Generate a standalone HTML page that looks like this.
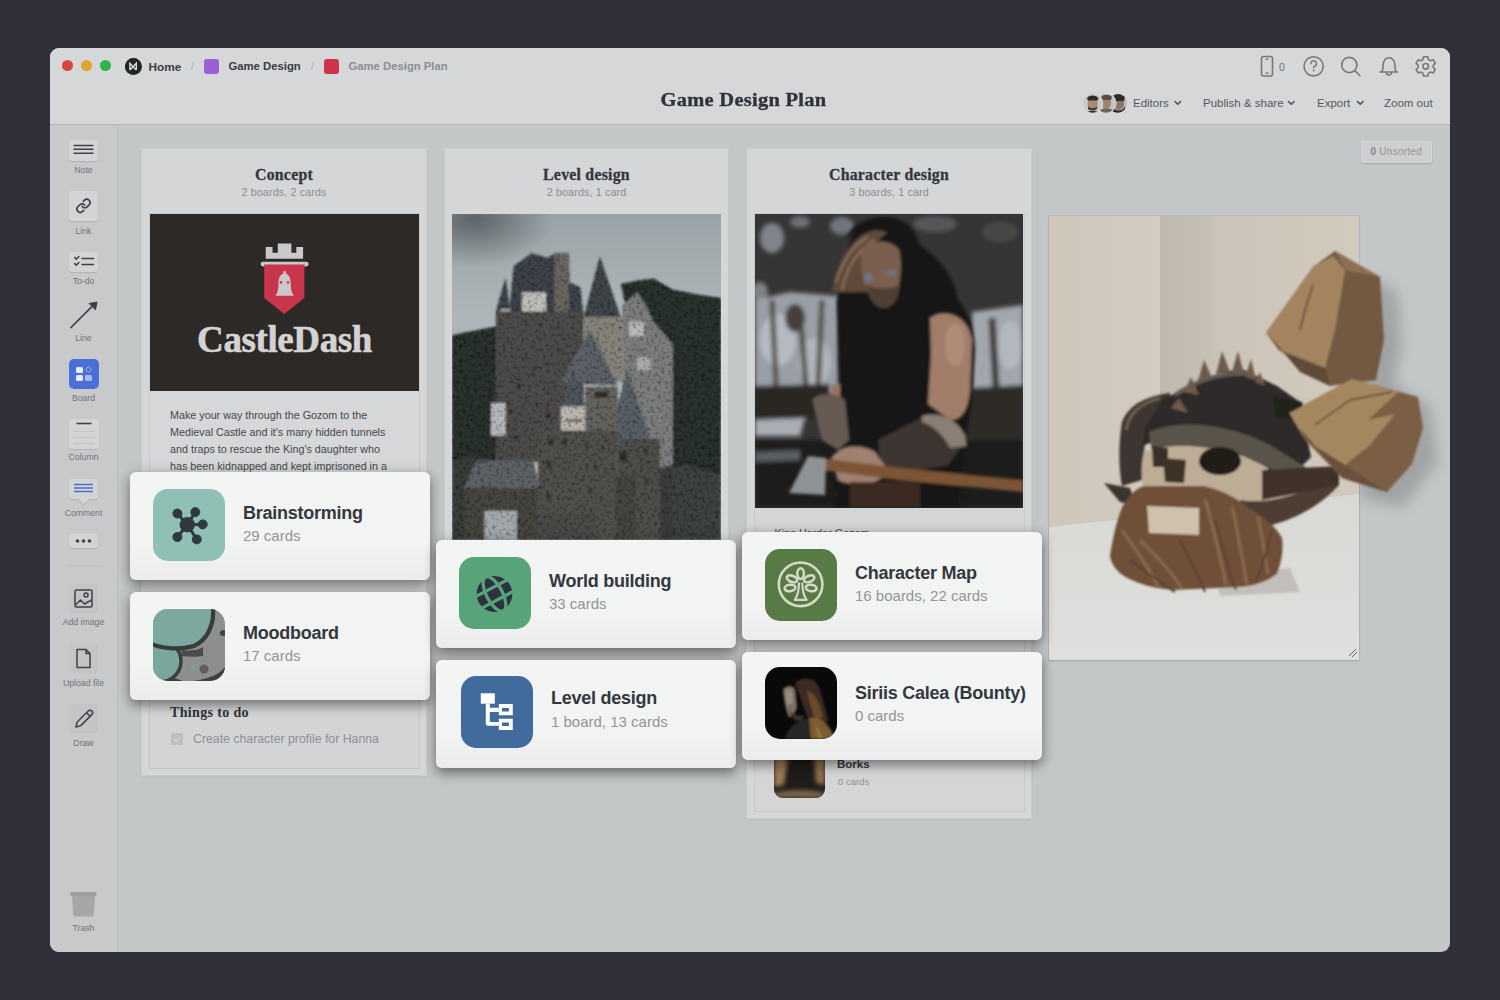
<!DOCTYPE html>
<html><head><meta charset="utf-8">
<style>
*{box-sizing:border-box;margin:0;padding:0}
html,body{width:1500px;height:1000px;overflow:hidden;background:#30303a;font-family:"Liberation Sans",sans-serif}
.a{position:absolute}
#win{left:50px;top:48px;width:1400px;height:904px;border-radius:9px;background:#c4c7c8;overflow:hidden}
#hdr{left:50px;top:48px;width:1400px;height:77px;background:#d6d7d9;border-radius:9px 9px 0 0;border-bottom:1px solid #b4b6b8}
#side{left:50px;top:125px;width:68px;height:827px;background:#c8c9cb;border-right:1px solid #babcbe;border-bottom-left-radius:9px}
.dot{width:11px;height:11px;border-radius:50%}
.crumb{font-size:11.3px;font-weight:bold;color:#3a3d42;white-space:nowrap}
.tl{font-size:8.7px;color:#717478;text-align:center;width:60px;white-space:nowrap}
.tb{background:#d3d4d6;border-radius:3px;box-shadow:0 1px 1px rgba(0,0,0,.12)}
.col{background:#d5d6d8;box-shadow:0 0 0 1px #c9cbcd,0 1px 3px rgba(0,0,0,.12)}
.ct{font-family:"Liberation Serif",serif;font-weight:bold;font-size:15.8px;letter-spacing:.25px;-webkit-text-stroke:.3px #33373c;color:#33373c;text-align:center;white-space:nowrap}
.cs{font-size:10.8px;letter-spacing:.1px;color:#8a8d91;text-align:center;white-space:nowrap}
.fc{background:linear-gradient(#f3f4f4 0,#f2f3f3 65%,#ebeceb 100%);border-radius:6px;box-shadow:0 6px 12px rgba(0,0,0,.38),0 0 14px rgba(0,0,0,.14)}
.ic{width:72px;height:72px;border-radius:15px;overflow:hidden}
.ft{font-size:18px;font-weight:bold;color:#33383e;white-space:nowrap;letter-spacing:-.25px}
.hb{font-size:11.5px;color:#55585c;white-space:nowrap}
.fs{font-size:15px;color:#939598;white-space:nowrap}
</style></head><body>
<div id="win" class="a"></div>
<div id="hdr" class="a"></div>
<div id="side" class="a"></div>

<!-- traffic lights -->
<div class="a dot" style="left:62px;top:60px;background:#d8453b"></div>
<div class="a dot" style="left:81px;top:60px;background:#e0a42c"></div>
<div class="a dot" style="left:100px;top:60px;background:#2fb344"></div>

<!-- breadcrumb -->
<div class="a" style="left:125px;top:58px;width:17px;height:17px;border-radius:50%;background:#25272a"></div>
<div class="a crumb" style="left:148.5px;top:59.5px;font-size:11.8px">Home</div>
<div class="a crumb" style="left:191px;top:59.5px;color:#b3b5b8;font-weight:normal">/</div>
<div class="a" style="left:204px;top:59px;width:15px;height:15px;border-radius:3px;background:#9b5fd8"></div>
<div class="a crumb" style="left:228.5px;top:59.5px">Game Design</div>
<div class="a crumb" style="left:311px;top:59.5px;color:#b3b5b8;font-weight:normal">/</div>
<div class="a" style="left:324px;top:59px;width:15px;height:15px;border-radius:3px;background:#cc3447"></div>
<div class="a crumb" style="left:348.5px;top:59.5px;color:#8b8e92">Game Design Plan</div>

<!-- title -->
<div class="a" style="left:600px;top:89px;width:287px;text-align:center;font-family:'Liberation Serif',serif;font-weight:bold;font-size:18.6px;color:#30343a;letter-spacing:.25px;transform:scaleX(1.1);-webkit-text-stroke:.35px #30343a">Game Design Plan</div>


<!-- milanote logo -->
<svg class="a" style="left:125px;top:58px" width="17" height="17" viewBox="0 0 17 17"><circle cx="8.2" cy="8.4" r="8.1" fill="#222526"/><path d="M4.9 12 V5.2 L8.1 8.7 L11.3 5.2 V12 M4.9 12 L8.1 8.7 L11.3 12" fill="none" stroke="#d9dcdb" stroke-width="1.4" stroke-linejoin="miter"/></svg>
<!-- right icons -->
<svg class="a" style="left:1255px;top:52px" width="190" height="30" viewBox="1255 52 190 30" fill="none" stroke="#77797d" stroke-width="1.6" stroke-linecap="round" stroke-linejoin="round">
 <rect x="1261.5" y="56.5" width="11" height="19.5" rx="2"/>
 <path d="M1265.8 59.2h2.4 M1265.8 73.2h2.4" stroke-width="1.2"/>
 <circle cx="1313.6" cy="66.3" r="9.6"/>
 <path d="M1311 63.6a2.7 2.7 0 1 1 3.6 2.5c-.8.35-1 .8-1 1.6" stroke-width="1.5"/>
 <circle cx="1313.6" cy="70.6" r=".5" fill="#77797d" stroke-width="1"/>
 <circle cx="1349.3" cy="65" r="7.6"/>
 <path d="M1354.8 70.5 L1360 75.8"/>
 <path d="M1380 72 h17.5 M1381.5 72 c1.6-1.6 1.6-3 1.6-7 c0-4.2 2.8-7.3 5.9-7.3 c3.1 0 5.9 3.1 5.9 7.3 c0 4 0 5.4 1.6 7 M1386.5 72.5 a2.5 2.5 0 0 0 5 0"/>
 <path d="M1423.6 56.8 h4.2 l.7 2.8 l2 1.1 l2.7-.9 l2.1 3.6 l-2.1 1.9 v2.2 l2.1 1.9 l-2.1 3.6 l-2.7-.9 l-2 1.1 l-.7 2.8 h-4.2 l-.7-2.8 l-2-1.1 l-2.7.9 l-2.1-3.6 l2.1-1.9 v-2.2 l-2.1-1.9 l2.1-3.6 l2.7.9 l2-1.1 z"/>
 <circle cx="1425.7" cy="66.3" r="2.8"/>
</svg>
<div class="a" style="left:1279px;top:61px;font-size:10.5px;color:#6f7276">0</div>
<!-- avatars -->
<svg class="a" style="left:1080px;top:90px" width="50" height="26" viewBox="1080 90 50 26">
 <defs><clipPath id="av3"><circle cx="1117.5" cy="103.2" r="9.5"/></clipPath><clipPath id="av2"><circle cx="1106" cy="103.2" r="9.5"/></clipPath><clipPath id="av1"><circle cx="1092.7" cy="103.2" r="9.5"/></clipPath></defs>
 <circle cx="1117.5" cy="103.2" r="10.5" fill="#d6d7d9"/>
 <g clip-path="url(#av3)"><rect x="1105" y="92" width="25" height="25" fill="#b9babb"/><ellipse cx="1119" cy="103" rx="5" ry="7" fill="#8a7565"/><path d="M1112 97 C1115 93 1122 93 1125 97 L1124 101 L1113 101 Z" fill="#2e2a27"/><path d="M1113 106 C1115 112 1123 112 1125 106 L1125 114 L1112 114 Z" fill="#2f2b28"/></g>
 <circle cx="1106" cy="103.2" r="10.5" fill="#d6d7d9"/>
 <g clip-path="url(#av2)"><rect x="1094" y="92" width="25" height="25" fill="#c3c4c4"/><ellipse cx="1106.5" cy="103" rx="4.5" ry="6.5" fill="#9c8572"/><path d="M1101 97 C1103 94 1110 94 1112 97 L1111 100 L1102 100 Z" fill="#5a4c40"/><path d="M1099 110 C1102 108 1110 108 1113 110 L1114 114 L1098 114 Z" fill="#6a6a58"/></g>
 <circle cx="1092.7" cy="103.2" r="10.5" fill="#d6d7d9"/>
 <g clip-path="url(#av1)"><rect x="1080" y="92" width="25" height="25" fill="#c8c9ca"/><ellipse cx="1092.7" cy="103.5" rx="5" ry="6.5" fill="#a88b76"/><path d="M1087 98.5 C1088 94.5 1097 94.5 1098.5 98.5 L1097.5 100.5 L1088 100.5 Z" fill="#2e2a27"/><path d="M1088 106 C1090 109 1095 109 1097.5 106 L1097 109 C1095 111 1090 111 1088 109 Z" fill="#4a3a30"/><path d="M1084 114 C1086 110 1099 110 1101 114 Z" fill="#2e2c2a"/></g>
</svg>
<div class="a hb" style="left:1133px;top:97px">Editors</div>
<div class="a hb" style="left:1203px;top:97px">Publish &amp; share</div>
<div class="a hb" style="left:1317px;top:97px">Export</div>
<div class="a hb" style="left:1384px;top:97px">Zoom out</div>
<svg class="a" style="left:1170px;top:96px" width="200" height="14" viewBox="1170 96 200 14" fill="none" stroke="#4a4d51" stroke-width="1.5" stroke-linecap="round" stroke-linejoin="round">
 <path d="M1175 101.5l2.8 2.8l2.8-2.8 M1288.5 101.5l2.8 2.8l2.8-2.8 M1357.5 101.5l2.8 2.8l2.8-2.8"/>
</svg>

<!-- sidebar tools -->
<div class="a tb" style="left:69px;top:140px;width:29px;height:21px"></div>
<svg class="a" style="left:69px;top:140px" width="29" height="21"><path d="M4.5 5.5h20 M4.5 9.3h20 M4.5 13.2h20" stroke="#3f4246" stroke-width="1.4"/></svg>
<div class="a tl" style="left:53.5px;top:165px">Note</div>

<div class="a tb" style="left:69px;top:191px;width:29px;height:30px"></div>
<svg class="a" style="left:69px;top:191px" width="29" height="30" viewBox="0 0 29 30" fill="none" stroke="#3f4246" stroke-linecap="round" stroke-linejoin="round"><g transform="translate(14.5 14.8) scale(.66) translate(-12 -12)" stroke-width="2.5"><path d="M10 13a5 5 0 0 0 7.54.54l3-3a5 5 0 0 0-7.07-7.07l-1.72 1.71"/><path d="M14 11a5 5 0 0 0-7.54-.54l-3 3a5 5 0 0 0 7.07 7.07l1.71-1.71"/></g></svg>
<div class="a tl" style="left:53.5px;top:226px">Link</div>

<div class="a tb" style="left:69px;top:252px;width:29px;height:20px"></div>
<svg class="a" style="left:69px;top:250px" width="29" height="22" fill="none" stroke="#3f4246" stroke-width="1.5" stroke-linecap="round" stroke-linejoin="round"><path d="M5.8 7.6l1.5 1.5l2.6-2.6 M5.8 13.6l1.5 1.5l2.6-2.6 M13 8.5h11.5 M13 14.6h11.5"/></svg>
<div class="a tl" style="left:53.5px;top:276px">To-do</div>

<svg class="a" style="left:65px;top:297px" width="40" height="36" fill="none" stroke="#3a3d41" stroke-width="1.7" stroke-linecap="round"><path d="M6 30.5 L30.5 6"/><path d="M24.5 6.5 L32 5 L30.5 12.5 Z" fill="#3a3d41" stroke-linejoin="round" stroke-width="1"/></svg>
<div class="a tl" style="left:53.5px;top:333px">Line</div>

<div class="a" style="left:69px;top:359px;width:30px;height:30px;border-radius:5px;background:#4a6fd8"></div>
<svg class="a" style="left:69px;top:359px" width="30" height="30"><rect x="7" y="8" width="7" height="6" rx="1.5" fill="#e8ecf5"/><rect x="7" y="16" width="7" height="6" rx="1.5" fill="#e8ecf5"/><rect x="16" y="16" width="7" height="6" rx="1.5" fill="#a9bbeb"/><path d="M19.5 7.5l3 3l-3 3l-3-3z" fill="none" stroke="#a9bbeb" stroke-width="1"/></svg>
<div class="a tl" style="left:53.5px;top:393px">Board</div>

<div class="a tb" style="left:69px;top:419px;width:30px;height:30px"></div>
<svg class="a" style="left:69px;top:419px" width="30" height="30"><path d="M7.5 4.5h15" stroke="#3f4246" stroke-width="1.6"/><path d="M4 12.5h22 M4 18.5h22 M4 24.5h22" stroke="#c2c4c6" stroke-width="1"/></svg>
<div class="a tl" style="left:53.5px;top:452px">Column</div>

<div class="a tb" style="left:69px;top:479px;width:29px;height:20px"></div>
<div class="a" style="left:80px;top:496px;width:7px;height:7px;background:#d3d4d6;transform:rotate(45deg);box-shadow:1px 1px 1px rgba(0,0,0,.1)"></div>
<svg class="a" style="left:69px;top:479px" width="29" height="20"><path d="M5 5.5h19 M5 9h19 M5 12.5h19" stroke="#4c6fc9" stroke-width="1.3"/></svg>
<div class="a tl" style="left:53.5px;top:508px">Comment</div>

<div class="a tb" style="left:69px;top:534px;width:29px;height:14px"></div>
<svg class="a" style="left:69px;top:534px" width="29" height="14"><circle cx="8.5" cy="7" r="1.8" fill="#3f4246"/><circle cx="14.5" cy="7" r="1.8" fill="#3f4246"/><circle cx="20.5" cy="7" r="1.8" fill="#3f4246"/></svg>
<div class="a" style="left:66px;top:565px;width:35px;height:1px;background:#bfc1c3"></div>

<div class="a" style="left:69px;top:584px;width:29px;height:29px;border-radius:3px;background:#c3c4c6"></div>
<svg class="a" style="left:69px;top:584px" width="29" height="29" fill="none" stroke="#3f4246" stroke-width="1.5" stroke-linejoin="round"><rect x="6" y="6" width="17" height="17" rx="1.5"/><circle cx="17" cy="11" r="2"/><path d="M6.5 21 l5-5 l4 4 l7-4"/></svg>
<div class="a tl" style="left:53.5px;top:617px">Add image</div>

<div class="a" style="left:69px;top:644px;width:29px;height:29px;border-radius:3px;background:#c3c4c6"></div>
<svg class="a" style="left:69px;top:644px" width="29" height="29" fill="none" stroke="#3f4246" stroke-width="1.5" stroke-linejoin="round"><path d="M8 5.5h9l4 4v14h-13z M17 5.5v4h4"/></svg>
<div class="a tl" style="left:53.5px;top:678px">Upload file</div>

<div class="a" style="left:69px;top:704px;width:29px;height:29px;border-radius:3px;background:#c3c4c6"></div>
<svg class="a" style="left:69px;top:704px" width="29" height="29" fill="none" stroke="#3f4246" stroke-width="1.5" stroke-linejoin="round"><path d="M7 23 l1.2-5 l11-11 a2.5 2.5 0 0 1 3.6 3.6 l-11 11 z M17.5 8.7l3.6 3.6"/></svg>
<div class="a tl" style="left:53.5px;top:738px">Draw</div>

<svg class="a" style="left:69px;top:890px" width="29" height="29"><rect x="1.5" y="2" width="26" height="4" rx="1" fill="#9c9e9f"/><path d="M3 6h23l-1.3 19a1.8 1.8 0 0 1-1.8 1.6h-16.8a1.8 1.8 0 0 1-1.8-1.6z" fill="#a4a6a7"/></svg>
<div class="a tl" style="left:53.5px;top:923px">Trash</div>

<!-- columns -->
<div class="a col" style="left:142px;top:149px;width:284px;height:626px"></div>
<div class="a col" style="left:445px;top:149px;width:283px;height:400px"></div>
<div class="a col" style="left:747px;top:149px;width:284px;height:669px"></div>
<div class="a ct" style="left:142px;top:166px;width:284px">Concept</div>
<div class="a cs" style="left:142px;top:186px;width:284px">2 boards, 2 cards</div>
<div class="a ct" style="left:445px;top:166px;width:283px">Level design</div>
<div class="a cs" style="left:445px;top:186px;width:283px">2 boards, 1 card</div>
<div class="a ct" style="left:747px;top:166px;width:284px">Character design</div>
<div class="a cs" style="left:747px;top:186px;width:284px">3 boards, 1 card</div>

<!-- concept note card -->
<div class="a" style="left:149px;top:213px;width:271px;height:270px;background:#d6d7d9;border:1px solid #c6c8ca"></div>
<div class="a" style="left:150px;top:214px;width:269px;height:177px;background:#2c2927"></div>
<svg class="a" style="left:150px;top:214px" width="269" height="177" viewBox="150 214 269 177">
 <path d="M265.7 258.8 V246.9 H272.5 V252.8 H277.8 V243.5 H291.4 V252.8 H296.3 V246.9 H303.1 V258.8 Z" fill="#c9c9c9"/>
 <rect x="260.6" y="261.8" width="48" height="4.6" rx="2.3" fill="#c9c9c9"/>
 <path d="M264.2 263.5 H304.4 V298 L284.3 314 L264.2 298 Z" fill="#c8364b"/>
 <rect x="264.2" y="262.5" width="40.2" height="2" fill="#c9c9c9"/>
 <path d="M275.6 295.7 C277.6 293 278.5 289 278.5 283 C278.5 277 281 273.6 284.6 273.6 C288.2 273.6 290.7 277 290.7 283 C290.7 289 291.6 293 293.7 295.7 Z" fill="#c9c9c9"/>
 <rect x="283.3" y="271" width="2.6" height="3.5" rx="1" fill="#c9c9c9"/>
 <circle cx="281" cy="282.4" r="1.3" fill="#c8364b"/><circle cx="288" cy="282.4" r="1.3" fill="#c8364b"/>
</svg>
<div class="a" style="left:150px;top:317.5px;width:269px;text-align:center;font-family:'Liberation Serif',serif;font-weight:bold;font-size:37px;color:#d3d3d3;letter-spacing:-.4px;-webkit-text-stroke:.6px #d3d3d3" id="cd">CastleDash</div>
<div class="a" style="left:170px;top:407px;width:240px;font-size:10.75px;line-height:17px;color:#44474b;white-space:nowrap" id="desc">Make your way through the Gozom to the<br>Medieval Castle and it's many hidden tunnels<br>and traps to rescue the King's daughter who<br>has been kidnapped and kept imprisoned in a</div>

<!-- todo card -->
<div class="a" style="left:149px;top:690px;width:271px;height:79px;background:#d3d4d6;border:1px solid #c3c5c7"></div>
<div class="a" style="left:170px;top:704.5px;font-family:'Liberation Serif',serif;font-weight:bold;font-size:14px;letter-spacing:.35px;color:#2f3338;white-space:nowrap">Things to do</div>
<div class="a" style="left:171px;top:733px;width:12px;height:12px;border-radius:2px;background:#bdbfc1"></div>
<svg class="a" style="left:171px;top:733px" width="12" height="12"><path d="M3 6.2l2.2 2.2l4-4.2" fill="none" stroke="#d6d7d9" stroke-width="1.5"/></svg>
<div class="a" style="left:193px;top:731.5px;font-size:12.3px;color:#8d9094;white-space:nowrap">Create character profile for Hanna</div>

<!-- col3 lower card -->
<div class="a" style="left:754px;top:213px;width:271px;height:599px;background:#d4d5d7;border:1px solid #c6c8ca"></div>


<div class="a" style="left:774.5px;top:527px;font-size:10.75px;color:#44474b;white-space:nowrap">King Hardar Gozom</div>
<div class="a" style="left:774px;top:745px;width:51px;height:53px;border-radius:9px;overflow:hidden;background:#1f1c1a"><svg width="51" height="53"><defs><filter id="bb"><feGaussianBlur stdDeviation="2"/></filter></defs><g filter="url(#bb)"><path d="M0 10 L14 14 L10 40 L0 42 Z" fill="#9a7a55"/><path d="M40 14 L51 10 L51 40 L42 38 Z" fill="#8e6e4c"/><path d="M0 48 C15 44 35 44 51 48 L51 53 L0 53 Z" fill="#7a644c"/></g></svg></div>
<div class="a" style="left:837px;top:758px;font-size:11.5px;font-weight:bold;color:#33373c">Borks</div>
<div class="a" style="left:838px;top:776px;font-size:9.5px;color:#8e9195">0 cards</div>

<!-- unsorted -->
<div class="a" style="left:1360.5px;top:141px;width:71.5px;height:22px;border-radius:2px;background:#cdcfd0;box-shadow:0 1px 1.5px rgba(0,0,0,.18),inset 0 0 0 1px #d3d5d6;font-size:10px;letter-spacing:.25px;color:#939598;text-align:center;line-height:21px"><b style="color:#86888b">0</b> Unsorted</div>


<!-- castle photo -->
<svg class="a" style="left:452px;top:214px" width="269" height="326" viewBox="0 0 828 1000" preserveAspectRatio="none">
 <defs>
  <linearGradient id="sky" x1="0" y1="0" x2="0" y2="1"><stop offset="0" stop-color="#9aa3a7"/><stop offset=".3" stop-color="#adb5b8"/><stop offset="1" stop-color="#b4bbbe"/></linearGradient>
  <radialGradient id="skyd" cx="0.08" cy="0.03" r="0.3"><stop offset="0" stop-color="#535a5f" stop-opacity=".85"/><stop offset="1" stop-color="#4f565b" stop-opacity="0"/></radialGradient>
  <filter id="bl1" x="-2%" y="-2%" width="104%" height="104%"><feGaussianBlur in="SourceGraphic" stdDeviation="3" result="b"/><feTurbulence type="fractalNoise" baseFrequency="0.09" numOctaves="2" seed="3" result="n"/><feColorMatrix in="n" type="matrix" values="0 0 0 0 0  0 0 0 0 0  0 0 0 0 0  0 0 0 -1.5 0.8" result="na"/><feComposite in="na" in2="b" operator="in" result="nb"/><feMerge><feMergeNode in="b"/><feMergeNode in="nb"/></feMerge></filter>
 </defs>
 <rect x="0" y="0" width="828" height="1000" fill="url(#sky)"/>
 <rect x="0" y="0" width="828" height="500" fill="url(#skyd)"/>
 <g filter="url(#bl1)">
  <path d="M0 372 L60 360 L135 345 L140 1000 L0 1000 Z" fill="#2c312e"/>
  <path d="M0 760 L60 740 L120 780 L120 1000 L0 1000 Z" fill="#383c39"/>
  <path d="M520 215 L570 205 L620 198 L680 232 L760 248 L828 258 L828 1000 L640 1000 L640 780 Z" fill="#2b302d"/>
  <path d="M640 780 L720 770 L828 800 L828 1000 L640 1000 Z" fill="#3e423f"/>
  <!-- castle -->
  <path d="M135 300 L165 195 L180 300 Z" fill="#40454b"/>
  <path d="M175 310 L190 160 L245 120 L295 135 L318 120 L360 122 L362 210 L395 225 L405 315 L175 315 Z" fill="#3d4248"/>
  <rect x="315" y="120" width="45" height="190" fill="#66655f"/>
  <rect x="215" y="240" width="75" height="60" fill="#bdbdb8"/>
  <rect x="150" y="290" width="30" height="60" fill="#9ea1a2"/>
  <path d="M405 318 L455 130 L520 318 Z" fill="#3f444a"/>
  <rect x="135" y="300" width="270" height="460" fill="#4d4c48"/>
  <rect x="405" y="315" width="120" height="200" fill="#86837b"/>
  <path d="M525 280 L570 240 L600 285 L620 330 L680 400 L680 800 L525 800 Z" fill="#7a7d7c"/>
  <rect x="545" y="330" width="45" height="45" fill="#b7bab9"/>
  <rect x="570" y="440" width="40" height="40" fill="#a9acab"/>
  <path d="M330 520 L425 355 L510 525 Z" fill="#5b6168"/>
  <path d="M335 590 L375 480 L410 590 Z" fill="#4e545b"/>
  <rect x="335" y="590" width="75" height="75" fill="#b9b5ae"/>
  <rect x="350" y="630" width="50" height="8" fill="#6a5a55"/>
  <path d="M480 690 L540 480 L610 690 Z" fill="#585e66"/>
  <path d="M410 530 L510 530 L510 690 L410 690 Z" fill="#64625d"/>
  <rect x="265" y="665" width="245" height="335" fill="#51504b"/>
  <rect x="510" y="690" width="130" height="310" fill="#4e4d48"/>
  <rect x="120" y="580" width="45" height="100" fill="#b5b9bb"/>
  <path d="M75 755 L250 755 L270 840 L35 840 Z" fill="#5d6165"/>
  <rect x="40" y="840" width="225" height="160" fill="#464541"/>
  <rect x="100" y="910" width="100" height="90" fill="#a3a8ab"/>
  <rect x="265" y="920" width="175" height="80" fill="#4b4a46"/>
  <rect x="505" y="800" width="60" height="200" fill="#454541"/>
  <path d="M640 780 L680 770 L680 1000 L640 1000 Z" fill="#3a3d3a"/>
  <g fill="#2f2f2d">
  <rect x="290" y="610" width="14" height="16"/><rect x="440" y="545" width="40" height="18"/><rect x="290" y="760" width="14" height="20"/><rect x="295" y="690" width="18" height="20"/><rect x="340" y="690" width="14" height="18"/><rect x="410" y="700" width="8" height="18"/><rect x="460" y="710" width="8" height="14"/><rect x="515" y="730" width="24" height="28"/><rect x="290" y="860" width="12" height="16"/><rect x="440" y="770" width="8" height="16"/><rect x="590" y="720" width="10" height="14"/><rect x="595" y="810" width="10" height="14"/><rect x="420" y="840" width="10" height="18"/><rect x="200" y="520" width="10" height="16"/><rect x="175" y="600" width="8" height="14"/><rect x="215" y="440" width="8" height="12"/><rect x="250" y="470" width="8" height="12"/><rect x="190" y="680" width="10" height="16"/>
 </g>
 </g>

</svg>


<!-- warrior photo -->
<svg class="a" style="left:755px;top:214px" width="268" height="294" viewBox="755 214 268 294" preserveAspectRatio="none">
 <defs><filter id="bl2" x="-10%" y="-10%" width="120%" height="120%"><feGaussianBlur stdDeviation="2.2"/></filter>
 <filter id="bl3" x="-5%" y="-5%" width="110%" height="110%"><feGaussianBlur stdDeviation="1.6"/></filter></defs>
 <rect x="755" y="214" width="268" height="294" fill="#363536"/>
 <g filter="url(#bl2)">
  <ellipse cx="772" cy="238" rx="12" ry="15" fill="#7f848b"/>
  <ellipse cx="800" cy="222" rx="10" ry="6" fill="#6c7077"/>
  <ellipse cx="842" cy="226" rx="12" ry="9" fill="#70747b"/>
  <ellipse cx="935" cy="224" rx="22" ry="8" fill="#55575a"/>
  <ellipse cx="1000" cy="232" rx="18" ry="10" fill="#4a4645"/>
  <ellipse cx="760" cy="292" rx="8" ry="10" fill="#7d8188"/>
  <path d="M755 300 L790 292 L838 296 L838 395 L755 390 Z" fill="#9a9fa6"/>
  <ellipse cx="778" cy="340" rx="18" ry="26" fill="#b6bbc2"/>
  <ellipse cx="815" cy="362" rx="16" ry="24" fill="#b0b5bc"/>
  <path d="M772 300 L776 385 M800 312 L806 385 M822 300 L818 388" stroke="#4a4442" stroke-width="5"/>
  <ellipse cx="795" cy="318" rx="10" ry="14" fill="#453f3c"/>
  <path d="M972 312 L1023 305 L1023 392 L972 392 Z" fill="#a2a7ae"/>
  <ellipse cx="1010" cy="345" rx="12" ry="24" fill="#b3b8bf"/>
  <path d="M992 318 L996 388" stroke="#3d3735" stroke-width="7"/>
  <path d="M755 386 L830 384 L830 418 L755 420 Z" fill="#2a2624"/>
  <path d="M755 420 L805 418 L800 436 L755 436 Z" fill="#a9aeb5"/>
  <path d="M966 388 L1023 385 L1023 443 L966 443 Z" fill="#2e2a28"/>
  <path d="M958 446 L1023 443 L1023 462 L958 464 Z" fill="#a3a8af"/>
  <rect x="755" y="440" width="268" height="68" fill="#1f1e1e"/>
  <path d="M755 452 L800 450 L800 460 L755 462 Z" fill="#5a5e63"/>
 </g>
 <g filter="url(#bl3)">
  <!-- hood & body -->
  <path d="M846 240 C852 222 870 216 888 217 C905 218 915 228 920 245 C936 256 955 275 958 300 C968 310 975 330 975 350 L972 400 L966 440 L960 507 L835 507 L840 396 L837 302 L840 287 C843 265 848 245 854 232 Z" fill="#181514"/>
  <!-- hair -->
  <path d="M832 292 C836 268 846 246 862 235 C872 229 882 229 887 233 C874 242 867 256 863 272 L865 292 Z" fill="#5f4a3a"/>
  <path d="M836 282 C842 262 852 246 868 237 M842 290 C846 270 856 252 874 240" stroke="#8e7258" stroke-width="2.2" fill="none"/>
  <!-- face -->
  <path d="M862 250 C866 240 892 238 899 250 C902 262 901 278 898 290 L866 292 C862 278 860 262 862 250 Z" fill="#7a5e4f"/>
  <ellipse cx="868.5" cy="278" rx="4.5" ry="5" fill="#6f7480"/>
  <ellipse cx="891" cy="273" rx="5.5" ry="3" fill="#6f7480"/>
  <path d="M866 284 C868 300 876 308 884 308 C892 308 899 300 900 284 C895 290 872 290 866 284 Z" fill="#4d3f36"/>
  <!-- right arm -->
  <path d="M930 318 C945 308 968 315 972 340 L970 390 C968 410 962 420 950 420 L928 404 L931 355 Z" fill="#a27d69"/>
  <ellipse cx="955" cy="345" rx="10" ry="22" fill="#b08c78"/>
  <path d="M831 385 L840 384 L840 413 L831 413 Z" fill="#9a7563"/>
  <!-- left arm wrap -->
  <path d="M812 400 C818 392 835 392 845 400 L849 440 L838 450 L822 440 Z" fill="#665a52"/>
  <!-- right forearm wrap -->
  <path d="M878 440 L925 416 C945 414 966 425 966 440 L948 465 L895 474 L880 462 Z" fill="#3c3633"/>
  <path d="M922 416 C942 410 966 424 967 446 L950 448 C944 435 932 425 922 422 Z" fill="#8a7f74"/>
  <!-- hands -->
  <path d="M831 458 C840 445 860 443 875 452 L888 470 C882 485 855 488 838 480 Z" fill="#a08070"/>
  <!-- axe handle -->
  <path d="M819 458 L900 468 L1023 480 L1023 492 L900 480 L821 470 Z" fill="#7d5434"/>
  <rect x="850" y="482" width="70" height="25" fill="#3b2a22"/>
  <!-- axe head -->
  <path d="M789 493 L808 456 L826 458 L825 495 Z" fill="#8f9395"/>
 </g>
</svg>
<!-- skull photo -->
<div class="a" style="left:1049px;top:216px;width:310px;height:444px;box-shadow:0 0 0 1px rgba(0,0,0,.06),0 1px 2px rgba(0,0,0,.12)"></div>
<svg class="a" style="left:1049px;top:216px" width="310" height="444" viewBox="1049 216 310 444">
 <defs>
  <linearGradient id="wallL" x1="0" y1="0" x2="1" y2="0"><stop offset="0" stop-color="#cfc6ba"/><stop offset="1" stop-color="#d4ccc1"/></linearGradient>
  <linearGradient id="wallR" x1="0" y1="0" x2="1" y2="0"><stop offset="0" stop-color="#bfb8ad"/><stop offset=".25" stop-color="#c6bfb4"/><stop offset=".3" stop-color="#ccc4b8"/><stop offset="1" stop-color="#d3cabe"/></linearGradient>
  <linearGradient id="table" x1="0" y1="0" x2="0" y2="1"><stop offset="0" stop-color="#d8d8d5"/><stop offset="1" stop-color="#dfe0dd"/></linearGradient>
  <filter id="bl4" x="-5%" y="-5%" width="110%" height="110%"><feGaussianBlur stdDeviation="1.2"/></filter>
 </defs>
 <rect x="1049" y="216" width="112" height="320" fill="url(#wallL)"/>
 <rect x="1160" y="216" width="199" height="300" fill="url(#wallR)"/>
 <path d="M1049 527 L1359 494 L1359 660 L1049 660 Z" fill="url(#table)"/>
 <g filter="url(#bl4)">
  <path d="M1215 575 L1290 568 L1300 592 L1220 596 Z" fill="#c2bfba"/>
  <!-- left horn -->
  <path d="M1170 393 C1150 396 1130 402 1122 422 C1118 445 1119 470 1122 486 L1142 480 C1144 460 1144 440 1148 427 C1153 415 1160 410 1172 407 Z" fill="#3e3631"/>
  <path d="M1126 430 C1128 416 1138 404 1160 398" stroke="#6e5e50" stroke-width="3" fill="none"/>
  <path d="M1104 483 L1130 488 L1136 506 L1120 502 Z" fill="#3a3430"/>
  <!-- helmet -->
  <path d="M1142 446 L1146 425 L1162 400 L1204 379 L1240 368 L1277 386 L1300 402 L1311 457 L1282 486 L1240 452 L1173 434 Z" fill="#2e2c2a"/>
  <path d="M1175 395 C1200 378 1225 372 1250 374" stroke="#5e5a55" stroke-width="4" fill="none"/>
  <path d="M1149 432 C1180 418 1230 424 1270 445 L1310 470 L1306 488 L1266 466 C1232 448 1188 442 1152 452 Z" fill="#5a524a"/>
  <path d="M1216 374 L1222 351 L1230 372 Z M1232 372 L1238 351 L1244 374 Z M1245 377 L1251 359 L1256 380 Z M1255 382 L1260 372 L1265 386 Z M1198 381 L1204 360 L1212 378 Z M1184 392 L1191 377 L1199 395 Z M1171 408 L1179 398 L1188 413 Z" fill="#6e5a4c"/>
  <path d="M1272 396 L1302 402 L1306 420 L1276 418 Z" fill="#24211f"/>
  <!-- face bone -->
  <path d="M1144 452 C1172 440 1232 446 1268 468 L1272 500 L1240 510 L1147 508 C1141 490 1140 466 1144 452 Z" fill="#bdac96"/>
  <ellipse cx="1220" cy="461" rx="21" ry="14" fill="#221b17"/>
  <path d="M1152 446 L1168 448 L1168 467 L1153 467 Z" fill="#3a2e26"/>
  <path d="M1163 458 L1186 460 L1184 483 L1165 482 Z" fill="#3e3028"/>
  <!-- right horn low -->
  <path d="M1240 500 C1272 505 1312 494 1339 466 L1339 485 C1318 508 1290 522 1262 527 L1240 520 Z" fill="#4e3d32"/>
  <path d="M1262 470 L1339 466 L1339 485 L1262 500 Z" fill="#3f332c"/>
  <!-- beard -->
  <path d="M1110 556 C1114 530 1120 508 1126 501 C1134 490 1140 486 1147 486 L1204 486 C1222 490 1236 498 1246 506 C1262 516 1276 526 1282 538 C1284 552 1280 566 1277 574 C1266 582 1254 586 1240 587 L1173 590 C1150 588 1132 582 1121 574 C1114 568 1111 562 1110 556 Z" fill="#6f4f38"/>
  <path d="M1122 530 C1134 548 1148 566 1158 586 M1140 540 C1156 556 1172 572 1182 589 M1205 500 C1214 528 1220 556 1226 585 M1232 506 C1238 532 1242 558 1247 584 M1258 516 C1262 536 1265 556 1268 574" stroke="#8a6a4b" stroke-width="3" fill="none"/>
  <path d="M1130 560 C1150 575 1165 585 1175 592 M1215 520 C1222 545 1228 570 1236 590 M1180 540 C1190 560 1200 578 1205 592 M1272 530 C1268 548 1262 566 1256 582" stroke="#5a4030" stroke-width="2" fill="none"/>
  <path d="M1147 506 L1199 508 L1199 535 L1149 533 Z" fill="#cfc1ac"/>
 </g>
 <path d="M1349 656 L1356 649 M1352 657 L1357 652" stroke="#666" stroke-width="1"/>
</svg>
<!-- rocks -->
<svg class="a" style="left:1250px;top:240px" width="200" height="290" viewBox="1250 240 200 290">
 <defs><filter id="sh" x="-30%" y="-30%" width="160%" height="160%"><feGaussianBlur stdDeviation="7"/></filter><filter id="bl5"><feGaussianBlur stdDeviation="0.8"/></filter>
 <clipPath id="outside"><rect x="1359" y="240" width="91" height="290"/></clipPath></defs>
 <path d="M1366 275 L1397 292 L1402 345 L1394 385 L1430 405 L1438 462 L1402 508 L1359 498 Z" fill="rgba(0,0,0,.18)" filter="url(#sh)" clip-path="url(#outside)"/>
 <g filter="url(#bl5)">
  <path d="M1266 333 L1313 267 L1335 251 L1380 277 L1384 340 L1376 380 L1330 386 L1279 350 Z" fill="#735843"/>
  <path d="M1266 333 L1313 267 L1333 256 L1345 270 L1335 330 L1325 368 L1279 350 Z" fill="#a3845e"/>
  <path d="M1335 251 L1380 277 L1345 270 Z" fill="#8d6f52"/>
  <path d="M1269 335 L1279 350 L1325 368 L1330 386 L1300 372 Z" fill="#5f4837"/>
  <path d="M1313 285 L1305 310 L1300 330" stroke="#5a4434" stroke-width="1.5" fill="none"/>
  <path d="M1289 413 L1352 379 L1418 397 L1423 428 L1412 464 L1387 492 L1342 478 L1305 440 Z" fill="#7a5e45"/>
  <path d="M1289 413 L1352 379 L1398 392 L1368 420 L1395 414 L1370 445 L1345 465 L1305 440 Z" fill="#a5875f"/>
  <path d="M1305 440 L1345 465 L1387 492 L1342 478 L1300 428 Z" fill="#6a503c"/>
  <path d="M1315 425 L1350 400 L1392 392" stroke="#5a4434" stroke-width="1.5" fill="none"/>
 </g>
</svg>

<!-- floating cards -->
<div class="a fc" style="left:130px;top:472px;width:300px;height:108px"></div>
<div class="a fc" style="left:130px;top:592px;width:300px;height:108px"></div>
<div class="a fc" style="left:436px;top:540px;width:300px;height:108px"></div>
<div class="a fc" style="left:436px;top:660px;width:300px;height:108px"></div>
<div class="a fc" style="left:742px;top:532px;width:300px;height:108px"></div>
<div class="a fc" style="left:742px;top:652px;width:300px;height:108px"></div>

<div class="a ic" style="left:153px;top:489px;background:#8fbfb5"></div>
<svg class="a" style="left:153px;top:489px" width="72" height="72" viewBox="0 0 72 72" fill="#2e3a40" stroke="#2e3a40">
 <path d="M34.3 35.7 L24.4 24.5 M34.3 35.7 L42.3 23.1 M34.3 35.7 L49.7 35.4 M34.3 35.7 L24.4 48 M34.3 35.7 L43.8 50.4" stroke-width="3"/>
 <circle cx="34.3" cy="35.7" r="7.2"/><circle cx="24.4" cy="24.5" r="4.5"/><circle cx="42.3" cy="23.1" r="4.5"/><circle cx="49.7" cy="35.4" r="4.5"/><circle cx="24.4" cy="48" r="4.5"/><circle cx="43.8" cy="50.4" r="4.5"/>
</svg>
<div class="a ft" style="left:243px;top:502.5px">Brainstorming</div>
<div class="a fs" style="left:243px;top:527px">29 cards</div>

<div class="a ic" style="left:153px;top:609px;background:#8d8f8d"><svg width="72" height="72" viewBox="0 0 72 72"><defs><filter id="mb"><feGaussianBlur stdDeviation=".6"/></filter></defs><g filter="url(#mb)">
<path d="M0 62 L30 72 L0 72 Z" fill="#3e3f3d"/>
<circle cx="7" cy="52" r="21" fill="#79a69d" stroke="#3a3f3c" stroke-width="3.5"/>
<path d="M28 41 C36 42 44 42 50 38 L50 47 C44 48 36 48 29 47 Z" fill="#4b4a48"/>
<path d="M-3 34.6 C8 39.5 25 41 39.6 37.4 C50 33.5 57 24 59.8 10 L60.5 -3 L-3 -3 Z" fill="#7ba89f" stroke="#373c39" stroke-width="4.2"/>
<circle cx="51" cy="60" r="4.5" fill="#5c5d5b"/><circle cx="41" cy="58" r="3.5" fill="#7e9a94"/>
<circle cx="70" cy="24" r="3" fill="#3e4442"/>
<path d="M40 72 C55 70 66 66 72 58 L72 72 Z" fill="#3f403e"/>
</g></svg></div>
<div class="a ft" style="left:243px;top:622.5px">Moodboard</div>
<div class="a fs" style="left:243px;top:647px">17 cards</div>

<div class="a ic" style="left:459px;top:557px;background:#58a479"></div>
<svg class="a" style="left:459px;top:557px" width="72" height="72" viewBox="0 0 72 72">
 <circle cx="35.5" cy="37" r="18" fill="#2f3140"/>
 <g transform="rotate(-28 35.5 37)" stroke="#58a479" stroke-width="3.2" fill="none">
  <path d="M15 30.5 H56 M15 43.5 H56"/>
  <ellipse cx="35.5" cy="37" rx="8" ry="19"/>
 </g>
 <circle cx="35.5" cy="37" r="19.5" fill="none" stroke="#58a479" stroke-width="3"/>
</svg>
<div class="a ft" style="left:549px;top:570.7px">World building</div>
<div class="a fs" style="left:549px;top:595px">33 cards</div>

<div class="a ic" style="left:461px;top:676px;background:#416a9d"></div>
<svg class="a" style="left:461px;top:676px" width="72" height="72" viewBox="0 0 72 72" fill="#ffffff">
 <rect x="19.8" y="17.3" width="14" height="10.4"/>
 <path d="M24.8 27.7 H28.8 V31.7 H37.8 V36 H28.8 V46 H37.8 V49.7 H27 Q24.8 49.7 24.8 47.5 Z"/>
 <path d="M37.8 28 H51.8 V39.2 H37.8 Z M41 32 V35.6 H47.9 V32 Z" fill-rule="evenodd"/>
 <path d="M37.8 42.8 H51.8 V54 H37.8 Z M41 46.4 V50 H47.9 V46.4 Z" fill-rule="evenodd"/>
</svg>
<div class="a ft" style="left:551px;top:688px">Level design</div>
<div class="a fs" style="left:551px;top:713px">1 board, 13 cards</div>

<div class="a ic" style="left:765px;top:549px;background:#587b45"></div>
<svg class="a" style="left:765px;top:549px" width="72" height="72" viewBox="0 0 72 72" fill="none" stroke="#d3dac8" stroke-width="2.6">
 <circle cx="35.6" cy="35.3" r="21.8"/>
 <ellipse cx="35.6" cy="24.6" rx="3.3" ry="5.3"/>
 <ellipse cx="27" cy="29.8" rx="5.4" ry="3.1" transform="rotate(22 27 29.8)"/>
 <ellipse cx="44.2" cy="29.8" rx="5.4" ry="3.1" transform="rotate(-22 44.2 29.8)"/>
 <ellipse cx="25" cy="39" rx="5.4" ry="3.2" transform="rotate(-8 25 39)"/>
 <ellipse cx="46.2" cy="39" rx="5.4" ry="3.2" transform="rotate(8 46.2 39)"/>
 <path d="M34 33.5 C34 42 32.5 47 29.8 50.8 H41.6 C38.8 47 37.3 42 37.3 33.5" stroke-width="2.2" stroke-linejoin="round"/>
</svg>
<div class="a ft" style="left:855px;top:562.5px">Character Map</div>
<div class="a fs" style="left:855px;top:587px">16 boards, 22 cards</div>

<div class="a ic" style="left:765px;top:667px;background:#0a0909"><svg width="72" height="72" viewBox="0 0 72 72"><defs><filter id="sb"><feGaussianBlur stdDeviation="1.1"/></filter></defs><g filter="url(#sb)">
<path d="M30 16 C38 9 50 10 54 20 C58 32 60 44 64 54 L46 56 C40 46 36 32 30 16 Z" fill="#3b2c22"/>
<path d="M42 24 C50 26 55 36 58 50 L50 53 C47 42 44 34 42 24 Z" fill="#6e4a2c"/>
<path d="M18 22 C22 18 28 18 30 22 L32 40 C30 47 27 50 24 50 C21 44 19 34 18 22 Z" fill="#7d7265"/>
<path d="M20 26 C22 22 26 22 27 26 L28 36 L22 38 Z" fill="#9a8e80"/>
<path d="M24 42 C28 48 34 50 40 48 L36 54 C30 55 26 51 24 42 Z" fill="#3a3028"/>
<path d="M20 72 C22 62 30 54 44 51 L48 72 Z" fill="#252827"/>
<path d="M44 51 C56 49 64 56 70 72 L46 72 Z" fill="#7a5c30"/>
<path d="M50 56 L58 72 L54 72 Z" fill="#a07a40"/>
</g></svg></div>
<div class="a ft" style="left:855px;top:682.7px">Siriis Calea (Bounty)</div>
<div class="a fs" style="left:855px;top:707px">0 cards</div>
</body></html>
